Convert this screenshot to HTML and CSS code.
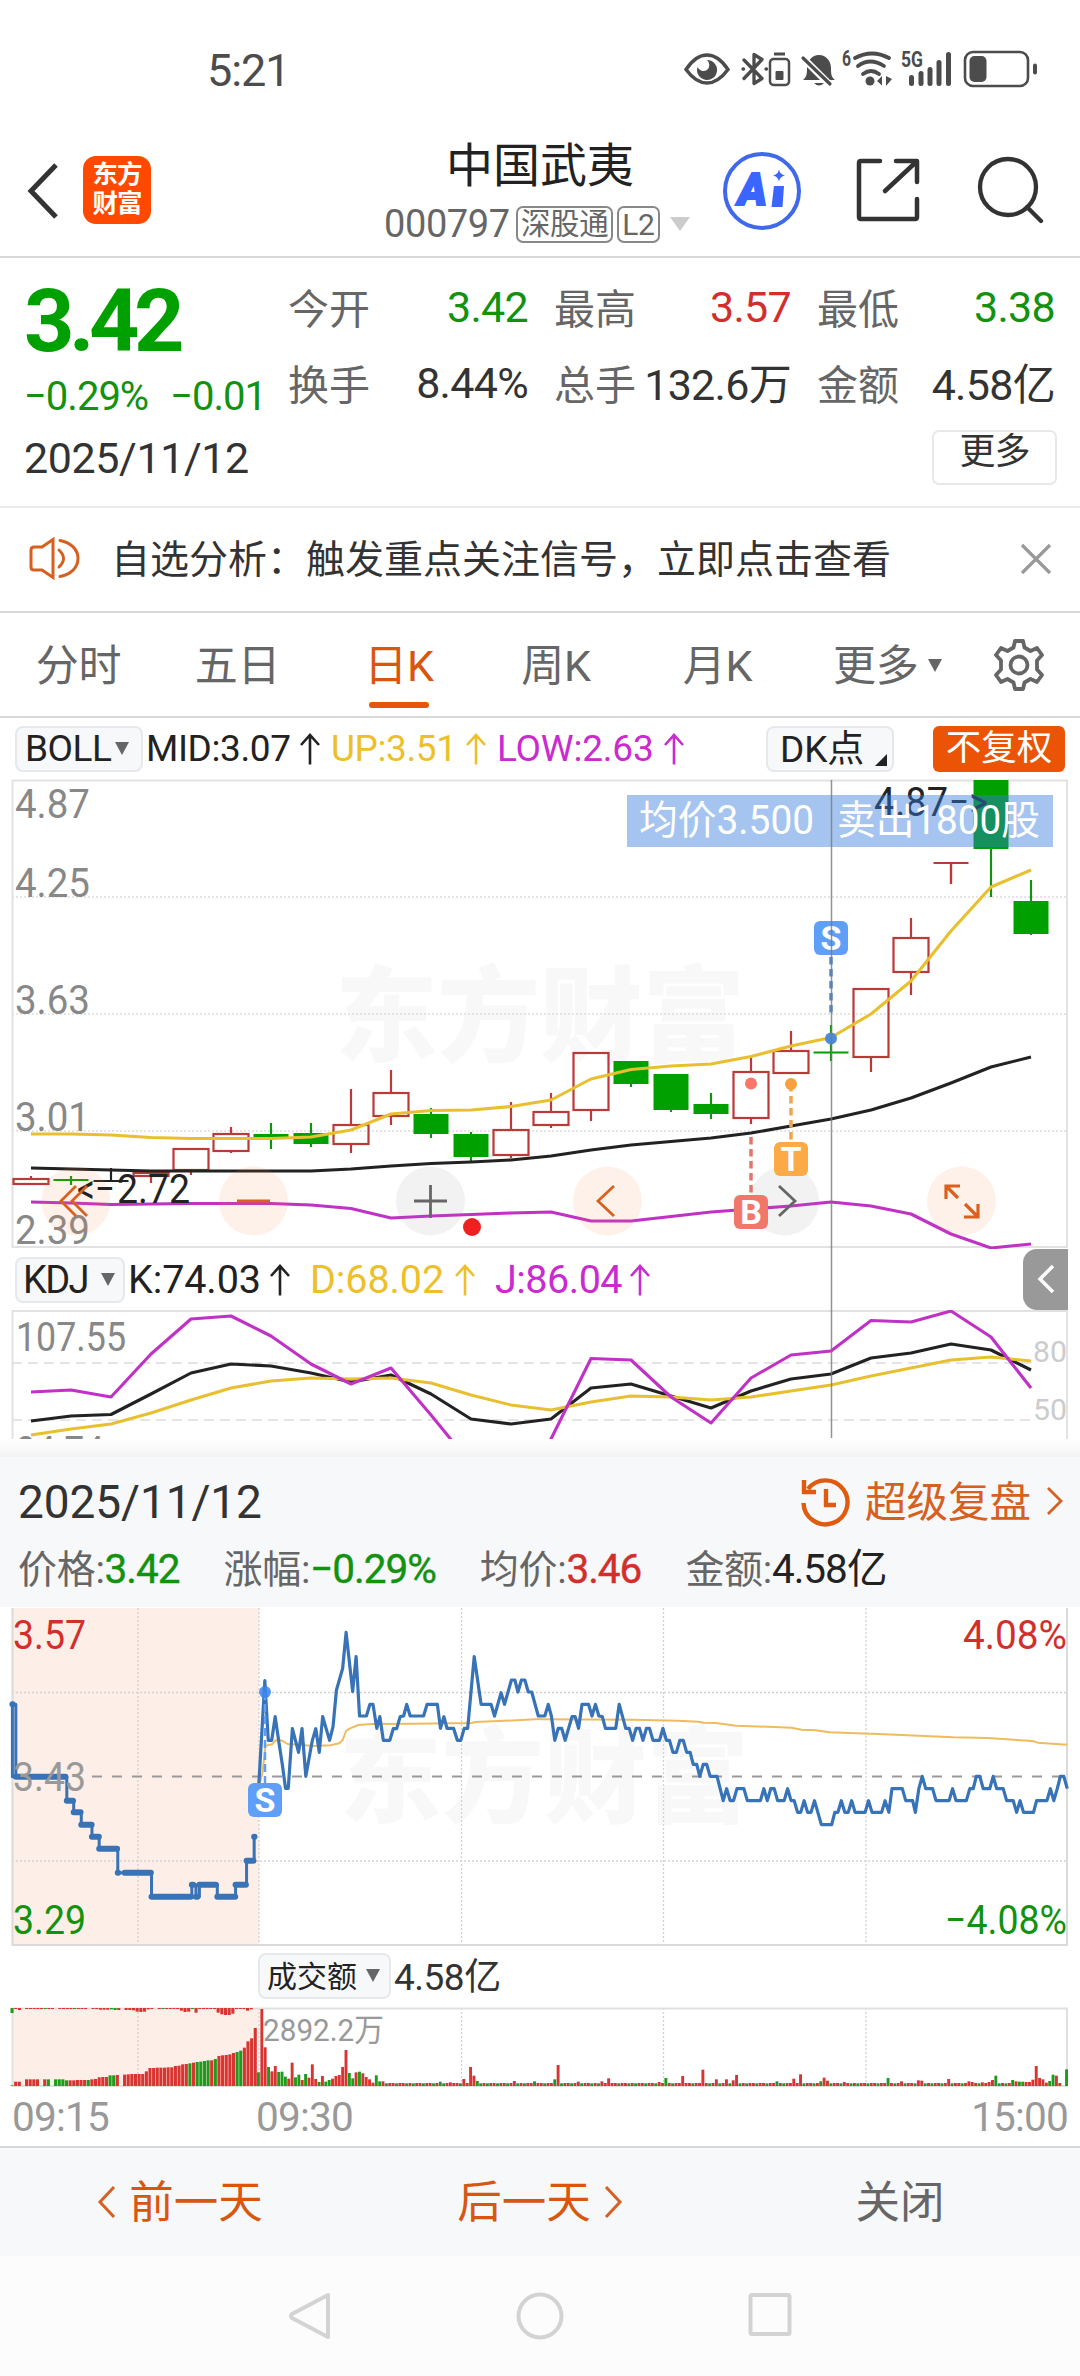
FILE: index.html
```html
<!DOCTYPE html>
<html lang="zh-CN">
<head>
<meta charset="utf-8">
<title>中国武夷 000797</title>
<link rel="stylesheet" href="styles.css">
</head>
<body>
<svg class="defs" width="0" height="0" aria-hidden="true">
  <symbol id="up" viewBox="0 0 20 32"><path d="M10 31.500V2M1 12L10 2l9 10" fill="none" stroke="currentColor" stroke-width="2.6"/></symbol>
</svg>

<header class="status">
  <span class="clock">5:21</span>
  <svg class="status-icons" width="352" height="40" viewBox="0 0 352 40" fill="none" stroke="#4c4c4c">
    <path d="M2 19.500C9 9 16 5 23 5s14 4 21 14.500C37 29 30 33 23 33S9 29 2 19.500z" stroke-width="3.400"/>
    <path d="M23 10a10 10 0 1 1-9.500 7a6.500 6.500 0 0 0 9.500 3a6.500 6.500 0 0 0 0-10z" fill="#4c4c4c" stroke="none"/>
    <g stroke-width="3.300" stroke-linejoin="round" stroke-linecap="round">
      <path d="M60 10l18 18.500-8 5V4.500l8 5L60 28.500"/><path d="M59 19h.5M82 19h.5"/>
    </g>
    <rect x="86" y="9" width="19" height="26" rx="3.500" stroke-width="2.500"/>
    <path d="M90 4h11" stroke-width="3"/><rect x="91.500" y="21" width="8" height="9" rx="1" fill="#4c4c4c" stroke="none"/>
    <path d="M119 30c4-3 4-7 4-12 0-7 5-13 12-13s12 6 12 13c0 5 0 9 4 12z" fill="#4c4c4c" stroke="none"/>
    <path d="M116 5l31 31" stroke="#fff" stroke-width="7"/>
    <path d="M119 8l27 26" stroke-width="3.200" stroke-linecap="round"/>
    <path d="M130 33h10q-5 5-10 0" fill="#4c4c4c" stroke="none"/>
    <g stroke-width="3.800" stroke-linecap="round">
      <path d="M171 8q17-9 34 0M174 16q12-9 26 0M179 24q8-6 16 0"/>
    </g>
    <circle cx="186" cy="31" r="4.500" fill="#4c4c4c" stroke="none"/>
    <path d="M193 31l5-5v9.500zM202 26v10l6-7z" fill="#4c4c4c" stroke="none"/>
    <g fill="#4c4c4c" stroke="none">
      <rect x="225" y="25" width="5" height="11" rx="2.500"/><rect x="234.500" y="21" width="5" height="15" rx="2.500"/><rect x="243.500" y="17" width="5" height="19" rx="2.500"/><rect x="252.500" y="10" width="5" height="26" rx="2.500"/><rect x="262" y="2" width="5" height="34" rx="2.500"/>
      <text x="158" y="16" class="mini" textLength="9" lengthAdjust="spacingAndGlyphs">6</text><text x="217" y="17" class="mini" textLength="22" lengthAdjust="spacingAndGlyphs">5G</text>
    </g>
    <rect x="281" y="2" width="63" height="34" rx="8" stroke-width="2.600"/>
    <rect x="285.500" y="6" width="17" height="26" rx="5" fill="#4c4c4c" stroke="none"/>
    <rect x="349" y="13.500" width="4" height="11" rx="2" fill="#4c4c4c" stroke="none"/>
  </svg>
</header>

<nav class="topbar">
  <svg class="back" width="32" height="58" viewBox="0 0 32 58"><path d="M29 3L4 29l25 26" fill="none" stroke="#333" stroke-width="5"/></svg>
  <div class="logo"><span>东方</span><span>财富</span></div>
  <div class="heading">
    <h1>中国武夷</h1>
    <div class="code-row"><span class="code">000797</span><span class="tag tag-sgt">深股通</span><span class="tag">L2</span><i class="tri tri-light"></i></div>
  </div>
  <svg class="ai" width="80" height="80" viewBox="0 0 80 80">
    <circle cx="40" cy="40" r="37" fill="none" stroke="#3f68ea" stroke-width="4"/>
    <text x="16" y="53.500" class="ai-text" textLength="29" lengthAdjust="spacingAndGlyphs">A</text>
    <path d="M52 35h10l-1.500 21h-11z" fill="#3a66ff"/>
    <path d="M57 18.500q1 5 6 6-5 1-6 6-1-5-6-6 5-1 6-6z" fill="#3a66ff"/>
  </svg>
  <svg class="share" width="66" height="66" viewBox="0 0 66 66" fill="none" stroke="#333" stroke-width="4.500" stroke-linecap="round" stroke-linejoin="round"><path d="M25 4H6q-2 0-2 2v54q0 2 2 2h54q2 0 2-2V42M41 4h21v21M60 6L30 34"/></svg>
  <svg class="search" width="68" height="68" viewBox="0 0 68 68" fill="none" stroke="#333" stroke-width="4.300" stroke-linecap="round"><circle cx="31" cy="31" r="28"/><path d="M50 51l14 14"/></svg>
</nav>

<section class="quote">
  <div class="quote-top">
    <div class="last">
      <div class="price">3.42</div>
      <div class="chg"><span>−0.29%</span><span>−0.01</span></div>
    </div>
    <dl class="stats">
      <div><dt>今开</dt><dd class="green">3.42</dd></div>
      <div><dt>最高</dt><dd class="red">3.57</dd></div>
      <div><dt>最低</dt><dd class="green">3.38</dd></div>
      <div><dt>换手</dt><dd>8.44%</dd></div>
      <div><dt>总手</dt><dd>132.6万</dd></div>
      <div><dt>金额</dt><dd>4.58亿</dd></div>
    </dl>
  </div>
  <div class="date-row"><span>2025/11/12</span><button class="more-btn">更多</button></div>
</section>

<section class="notice">
  <svg width="54" height="46" viewBox="0 0 54 46" fill="none" stroke="#d6601f" stroke-width="3"><path d="M25 3.500L14 11H6q-3 0-3 3v17q0 3 3 3h8l11 7.500z"/><path d="M31 14q9 8.500 0 17M32 4.500c11 2 18 9 18 18s-7 16-18 18" stroke-linecap="round"/></svg>
  <p>自选分析：触发重点关注信号，立即点击查看</p>
  <svg width="32" height="32" viewBox="0 0 32 32"><path d="M2 2l28 28M30 2L2 30" stroke="#999" stroke-width="3.200"/></svg>
</section>

<nav class="tabs">
  <span>分时</span><span>五日</span><span class="active">日K</span><span>周K</span><span>月K</span><span class="more">更多<i class="tri"></i></span>
  <svg class="gear" width="56" height="56" viewBox="0 0 56 56" fill="none" stroke="#666" stroke-width="3.800" stroke-linejoin="round"><circle cx="28" cy="28" r="8.500"/><path d="M24 4h8l1.500 6.500 6 3.500 6.500-3 5 7-5 5.500v9l5 5.500-5 7-6.500-3-6 3.500L32 52h-8l-1.500-6.500-6-3.500-6.500 3-5-7 5-5.500v-9L5 18l5-7 6.500 3 6-3.500z"/></svg>
</nav>

<section class="kchart">
  <div class="ind-row">
    <span class="pill boll">BOLL<i class="tri"></i></span>
    <span class="mid">MID:3.07</span><svg class="arr"><use href="#up"/></svg>
    <span class="upper">UP:3.51</span><svg class="arr upper-a"><use href="#up"/></svg>
    <span class="lower">LOW:2.63</span><svg class="arr lower-a"><use href="#up"/></svg>
    <span class="pill dk">DK点<i class="corner"></i></span>
    <span class="adjust">不复权</span>
  </div>
  <svg id="kline" class="plot" width="1080" height="470" viewBox="0 779 1080 470"></svg>
  <div class="ind-row kdj-row">
    <span class="pill kdj">KDJ<i class="tri"></i></span>
    <span class="kv">K:74.03</span><svg class="arr"><use href="#up"/></svg>
    <span class="dv">D:68.02</span><svg class="arr upper-a"><use href="#up"/></svg>
    <span class="jv">J:86.04</span><svg class="arr lower-a"><use href="#up"/></svg>
    <span class="drawer"><svg width="18" height="30" viewBox="0 0 18 30"><path d="M16 2L3 15l13 13" fill="none" stroke="#fff" stroke-width="3.500"/></svg></span>
  </div>
  <svg id="kdj" class="plot" width="1080" height="129" viewBox="0 1310 1080 129"></svg>
  <svg class="cross" width="3" height="658"><path d="M1.500 0V658" stroke="#777" stroke-opacity=".8" stroke-width="1.500"/></svg>
</section>

<div class="shade"></div>
<section class="replay">
  <div class="replay-head">
    <span class="rdate">2025/11/12</span>
    <svg class="hist" width="52" height="52" viewBox="0 0 52 52" fill="none" stroke="#e05a10" stroke-width="4.400"><path d="M8 13A22 22 0 1 1 3.500 27M4 4v12h12M26 13v16h10"/></svg>
    <span class="super">超级复盘</span>
    <svg width="20" height="32" viewBox="0 0 20 32"><path d="M3 3l13 13L3 29" fill="none" stroke="#d6601f" stroke-width="2.800"/></svg>
  </div>
  <div class="replay-stats">
    <span>价格:<b class="green">3.42</b></span><span>涨幅:<b class="green">−0.29%</b></span><span>均价:<b class="red">3.46</b></span><span>金额:<b>4.58亿</b></span>
  </div>
</section>

<svg id="minute" class="plot" width="1080" height="340" viewBox="0 1607 1080 340"></svg>
<div class="vol-row"><span class="pill vol">成交额<i class="tri"></i></span><span>4.58亿</span></div>
<svg id="volume" class="plot" width="1080" height="82" viewBox="0 2006 1080 82"></svg>
<div class="axis"><span>09:15</span><span>09:30</span><span class="end">15:00</span></div>

<footer class="days">
  <span class="day"><svg width="20" height="34" viewBox="0 0 20 34"><path d="M17 2L3 17l14 15"/></svg><em>前一天</em></span>
  <span class="day next"><em>后一天</em><svg width="20" height="34" viewBox="0 0 20 34"><path d="M3 2l14 15L3 32"/></svg></span>
  <span class="close"><em>关闭</em></span>
</footer>
<div class="sysnav">
  <svg width="44" height="48" viewBox="0 0 44 48"><path d="M40 3v42L4 26q-2-2 0-4z"/></svg>
  <svg width="48" height="48" viewBox="0 0 48 48"><circle cx="24" cy="24" r="21.500"/></svg>
  <svg width="44" height="46" viewBox="0 0 44 46"><rect x="2.500" y="3" width="39" height="39" rx="1.500"/></svg>
</div>
<script src="charts.js"></script>
</body>
</html>
```

FILE: styles.css
```css
* { box-sizing: border-box; }
body { margin: 0; width: 1080px; height: 2376px; background: #fff; color: #333; overflow: hidden;
  font-family: Roboto, "Noto Sans CJK SC", sans-serif; display: flex; flex-direction: column; }
body > * { flex: none; }
h1, p, dl, dd, dt { margin: 0; font-weight: 400; }
em { font-style: normal; }
svg { display: block; }
.defs { position: absolute; }
.green { color: #12920f; }
.red { color: #d22f2c; }
.tri { display: inline-block; border: 7.5px solid transparent; border-top: 13px solid #666; border-bottom: 0; }
.tri-light { border-width: 14px 10.5px 0; border-top-color: #ccc; }

.status { height: 128px; padding: 50px 44px 0 207px; display: flex; justify-content: space-between; }
.clock { font-size: 45px; line-height: 42px; letter-spacing: -1.1px; color: #4c4c4c; }
.status-icons { overflow: visible; }
.mini { font-size: 22px; font-weight: 700; font-family: Roboto, sans-serif; }

.topbar { height: 130px; border-bottom: 2px solid #d8d8d8; display: flex; padding-left: 27px; }
.back { margin-top: 34px; }
.logo { width: 68px; height: 68px; margin: 28px 0 0 24px; border-radius: 13px; background: #ff4800; color: #fff;
  display: flex; flex-direction: column; align-items: center; padding-top: 4px; font-size: 25.5px; line-height: 29px; font-weight: 700; letter-spacing: -1px; }
.heading { width: 320px; margin-left: 232px; }
h1 { font-size: 47px; line-height: 60px; margin: 8px 0 0 63px; color: #222; }
.code-row { display: flex; align-items: center; height: 40px; margin-top: 8px; color: #666; font-size: 38px; letter-spacing: -.4px; padding-left: 1px; }
.code { width: 132px; }
.tag { border: 2px solid #888; border-radius: 7px; height: 37px; line-height: 33px; font-size: 30px; padding: 0 3px; margin-right: 4px; letter-spacing: -.4px; }
.tag-sgt { font-size: 29.5px; }
.code-row .tri { margin-left: 6px; }
.ai { margin: 23px 0 0 19px; }
.ai-text { font: italic 900 44px Roboto, sans-serif; fill: #3a66ff; stroke: #3a66ff; stroke-width: 2px; }
.share { margin: 29px 0 0 53px; }
.search { margin: 28px 0 0 56px; }

.quote { height: 250px; border-bottom: 2px solid #ececec; }
.quote-top { display: flex; height: 172px; padding-left: 24px; }
.last { width: 265px; padding-top: 12px; color: #00a000; }
.price { height: 102px; line-height: 102px; font-size: 88px; font-weight: 700; letter-spacing: -5.500px; }
.chg { height: 48px; line-height: 48px; font-size: 40px; letter-spacing: -1px; display: flex; gap: 22px; color: #12920f; white-space: nowrap; padding-top: 1px; }
.stats { display: grid; grid-template-columns: 239px 236px 237px; grid-auto-rows: 76px; column-gap: 27px; padding-top: 10px; }
.stats div { display: flex; justify-content: space-between; align-items: center; white-space: nowrap; height: 76px; }
dt { font-size: 41px; color: #666; margin: -1px 0 0 -1px; }
dd { font-size: 43px; letter-spacing: -.7px; margin-top: 2px; }
.stats div:nth-child(n+5) dd { margin-top: -2px; }
.date-row { height: 54px; display: flex; justify-content: space-between; align-items: center; padding: 0 23px 0 24px; font-size: 43px; letter-spacing: -.4px; }
.date-row > span { margin-top: 2px; }
.more-btn { width: 125px; height: 55px; border: 2px solid #e8e8e8; border-radius: 7px; background: #fff; color: #333; font: 36px/40px Roboto, "Noto Sans CJK SC", sans-serif; padding: 0 0 12px; letter-spacing: -1px; }

.notice { height: 105px; border-bottom: 2px solid #d8d8d8; display: flex; align-items: center; padding: 0 28px 2px 28px; font-size: 39px; }
.notice p { flex: 1; margin: -6px 0 0 29px; }

.tabs { height: 105px; border-bottom: 2px solid #d8d8d8; display: grid; grid-template-columns: 157px 161px 162px 152px 171px 190px 56px; align-items: center; font-size: 43px; color: #666; }
.tabs > span { height: 103px; line-height: 106px; text-align: center; letter-spacing: -.3px; }
.tabs .active { color: #d9560f; display: flex; flex-direction: column; align-items: center; position: relative; }
.tabs .active::after { content: ""; position: absolute; bottom: 8px; width: 60px; height: 6px; border-radius: 3px; background: #e5550c; }
.tabs .more { text-align: left; padding-left: 30px; }
.tabs .tri { margin-left: 10px; vertical-align: 9px; }
.gear { margin-left: -2px; }

.kchart { position: relative; height: 721px; }
.ind-row { height: 61px; display: flex; align-items: center; padding-left: 15px; font-size: 37px; white-space: nowrap; color: #222; }
.pill { height: 46px; background: #f7f8fa; border: 2px solid #e6e8ec; border-radius: 8px; display: flex; align-items: center; color: #222; }
.arr { width: 20px; height: 32px; }
.boll { width: 128px; padding-left: 8px; letter-spacing: -.5px; }
.boll .tri { margin-left: 4px; }
.mid { width: 157px; padding-left: 3px; letter-spacing: -.4px; }
.upper { width: 146px; padding-left: 11px; letter-spacing: -.4px; color: #edc02a; }
.lower { width: 178px; padding-left: 11px; letter-spacing: -.2px; color: #ca2bd0; }
.upper-a { color: #edc02a; }
.lower-a { color: #ca2bd0; }
.dk { width: 128px; margin-left: 82px; padding: 0 0 5px 12px; position: relative; letter-spacing: -.1px; }
.corner { position: absolute; right: 5px; bottom: 4px; border-style: solid; border-width: 0 0 12px 12px; border-color: transparent transparent #222; }
.adjust { width: 132px; height: 46px; margin-left: 39px; border-radius: 6px; background: #eb5405; color: #fff; text-align: center; font-size: 35.5px; line-height: 45px; }
.plot { overflow: hidden; }
.kdj-row { height: 61px; font-size: 39.5px; }
.kdj { width: 110px; padding-left: 6px; letter-spacing: -1.6px; font-size: 38px; }
.kdj .tri { margin-left: 13px; }
.kv { width: 145px; padding-left: 3px; letter-spacing: -.1px; }
.dv { width: 165px; padding-left: 20px; color: #edc02a; letter-spacing: -.1px; }
.jv { width: 155px; padding-left: 20px; color: #ca2bd0; letter-spacing: -.5px; }
.drawer { width: 45px; height: 61px; margin-left: 373px; background: #999; border-radius: 14px 0 0 14px; padding: 15px 0 0 14px; }
.cross { position: absolute; left: 829.5px; top: 62px; }

.shade { height: 18px; background: linear-gradient(#fff, #f3f3f3); }
.replay { height: 150px; background: #f7f8fa; }
.replay-head { height: 88px; display: flex; align-items: center; padding-left: 18px; font-size: 46px; }
.rdate { width: 782px; letter-spacing: -.1px; padding-top: 1px; }
.hist { margin-top: 2px; }
.super { width: 180px; margin: -4px 0 0 13px; font-size: 41.5px; color: #d6601f; }
.replay-stats { display: flex; height: 48px; align-items: center; padding: 0 0 7px 18px; font-size: 39px; letter-spacing: -.3px; color: #666; gap: 44px; white-space: nowrap; }
.replay-stats b { font-weight: 400; font-size: 40.5px; letter-spacing: -1px; }
.replay-stats b.green, .replay-stats b.red { -webkit-text-stroke: .4px currentColor; }
.replay-stats span:last-child b { color: #222; }

.vol-row { height: 59px; display: flex; align-items: center; padding: 0 0 2px 258px; font-size: 37px; letter-spacing: -.5px; gap: 3px; }
.vol-row > span:last-child { margin-top: -4px; }
.vol { width: 133px; padding: 0 0 4px 7px; font-size: 30px; letter-spacing: 0; }
.vol .tri { margin: 4px 0 0 9px; }
.axis { height: 58px; display: flex; align-items: center; padding: 0 12px; font-size: 40.5px; letter-spacing: -.8px; color: #999; }
.axis span { width: 244px; }
.axis .end { margin-left: auto; text-align: right; }

.days { height: 110px; border-top: 2px solid #d8d8d8; background: #f7f8fa; display: grid; grid-template-columns: repeat(3, 360px); font-size: 44.5px; color: #d9560f; }
.days span { display: flex; align-items: center; justify-content: center; gap: 12px; }
.days em { margin-top: -7px; }
.days svg { fill: none; stroke: #d6601f; stroke-width: 3; }
.days .close { color: #666; }
.sysnav { flex: 1; background: #fcfcfc; display: flex; padding: 36px 288px 0; justify-content: space-between; }
.sysnav svg { fill: none; stroke: #d3d3d3; stroke-width: 4; stroke-linejoin: round; }

.lbl { font-family: Roboto, "Noto Sans CJK SC", sans-serif; font-size: 40px; }
.lbl.small { font-size: 30px; }
.lbl.cap { font-size: 32px; }
.mark { font: 900 104px "Noto Sans CJK SC", sans-serif; fill: #f8f8f8; }
.badge { font: 700 34px Roboto, sans-serif; fill: #fff; text-anchor: middle; }
```

FILE: charts.js
```js
const RED = '#d83432', GREEN = '#1f9a1c';
const cx = i => 31 + 40 * i;
const line = (pts, color, w) => `<polyline points="${pts}" fill="none" stroke="${color}" stroke-width="${w}" stroke-linejoin="round"/>`;
const series = (ys, color) => line(ys.map((y, i) => `${cx(i)},${y}`).join(' '), color, 3.1);
const label = (x, y, t, w, color = '#888', cls = '') => `<text class="lbl ${cls}" x="${x}" y="${y}" textLength="${w}" lengthAdjust="spacingAndGlyphs" fill="${color}">${t}</text>`;
const seg = (d, color, w, extra = '') => `<path d="${d}" fill="none" stroke="${color}" stroke-width="${w}" ${extra}/>`;
const badge = (x, y, t, color) => `<rect x="${x - 17}" y="${y - 17}" width="34" height="34" rx="6" fill="${color}"/><text class="badge" x="${x}" y="${y + 12}">${t}</text>`;
const mark = (x, y) => `<text class="mark" x="${x}" y="${y}" textLength="410" lengthAdjust="spacingAndGlyphs">东方财富</text>`;

// Daily candles: [direction, body top, body bottom, wick top, wick bottom]
const candles = [
  ['r', 1179, 1184, 1176, 1185], ['g', 1180, 1181, 1176, 1185], ['k', 1181, 1182, 1168, 1181], ['r', 1173, 1176, 1172, 1183],
  ['r', 1149, 1170, 1148, 1175], ['r', 1134, 1151, 1127, 1153], ['g', 1134, 1139, 1123, 1149], ['g', 1133, 1144, 1123, 1147],
  ['r', 1125, 1144, 1089, 1153], ['r', 1093, 1116, 1070, 1125], ['g', 1114, 1134, 1108, 1138], ['g', 1134, 1157, 1132, 1161],
  ['r', 1130, 1155, 1102, 1158], ['r', 1112, 1125, 1093, 1128], ['r', 1053, 1110, 1053, 1121], ['g', 1061, 1084, 1061, 1087],
  ['g', 1074, 1110, 1074, 1112], ['g', 1104, 1114, 1093, 1119], ['r', 1072, 1118, 1057, 1124], ['r', 1051, 1073, 1031, 1073],
  ['g', 1052.5, 1054, 1025, 1061], ['r', 989, 1057, 989, 1072], ['r', 938, 972, 918, 995], ['r', 863, 863, 863, 884],
  ['g', 780, 849, 780, 897], ['g', 901, 934, 880, 935]];
const upper = [1134, 1134, 1135, 1137.5, 1138.5, 1138.5, 1138.5, 1137, 1130, 1114, 1110.5, 1110, 1106.5, 1100, 1079, 1069.5, 1066, 1064, 1056.5, 1046, 1037.5, 1014, 981, 931, 887, 870];
const middle = [1168, 1169, 1170, 1171, 1171, 1171, 1171, 1171, 1169, 1166, 1163.5, 1162, 1160, 1156, 1150, 1145, 1141.5, 1138, 1133, 1126, 1119, 1110, 1098, 1083, 1067, 1057];
const lower = [1202, 1203, 1204.5, 1204, 1203.5, 1203.5, 1203.5, 1205, 1208.5, 1218, 1216, 1214.5, 1213, 1212, 1221, 1221, 1216.5, 1212, 1209, 1206, 1202, 1206, 1214, 1234, 1248, 1244];

let k = mark(335, 1054);
k += seg('M12 897H1067M12 1014H1067M12 1131H1067', '#ddd', 1.5, 'stroke-dasharray="2 2"');
k += seg('M12.5 780.500H1067V1247H12.500z', '#e2e2e2', 2);
[[818, '4.87'], [897, '4.25'], [1014, '3.63'], [1131, '3.01'], [1244, '2.39']].forEach(([y, t]) => k += label(15, y, t, 75));
candles.forEach(([c, t, b, wt, wb], i) => {
  const x = cx(i), col = c === 'r' ? '#b93a38' : c === 'g' ? '#00a000' : '#222';
  k += seg(`M${x} ${wt}V${c === 'r' ? t : wb}${c === 'r' ? `M${x} ${b}V${wb}` : ''}`, c === 'g' ? '#12920f' : col, 2.2);
  if (c === 'r' && b > t) k += `<rect x="${x - 17.5}" y="${t}" width="35" height="${b - t}" fill="none" stroke="${col}" stroke-width="2.2"/>`;
  else if (c === 'r') k += seg(`M${x - 17.5} ${t}h35M${x} ${t}V${wb}`, col, 2.2);
  else if (b - t < 2) k += seg(`M${x - 17.5} ${t}h35`, col, 2.2);
  else k += `<rect x="${x - 17.5}" y="${t}" width="35" height="${b - t}" fill="${col}"/>`;
});
k += series(lower, '#c031c6') + series(middle, '#222') + series(upper, '#e8c02f');
[[76, 1], [253.5, 1], [430.5, 0], [607.5, 1], [784.5, 0], [961.5, 1]].forEach(([x, hot]) =>
  k += `<circle cx="${x}" cy="1201" r="34.500" fill="${hot ? '#f97b3c' : '#888'}" fill-opacity=".11"/>`);
k += label(77, 1203, '&lt;−', 38, '#222') + label(117, 1203, '2.72', 73, '#222');
k += label(874, 816, '4.87', 74, '#222') + label(949, 816, '−&gt;', 39, '#222');
k += seg('M76 1186l-15 15 15 15M87 1186l-15 15 15 15M237 1201h33M614 1186l-16 15 16 15', '#d9601f', 2.8);
k += seg('M414 1201h33M430.500 1185v33M779 1186l16 15-16 15', '#666', 2.8);
k += seg('M946 1199v-13h14M947 1187l11 11M978 1204v13h-14M977 1216l-12-12', '#d9601f', 3.2);
k += '<circle cx="472" cy="1227" r="9" fill="#f02020"/>';
k += seg('M831 957V1014', '#5b8cc8', 3.5, 'stroke-dasharray="7.500 4.500"') + '<circle cx="831" cy="1038.500" r="6" fill="#4b8ddc"/>' + badge(831, 938, 'S', '#5f9ff8');
k += seg('M791 1084V1140', '#eda54f', 3.5, 'stroke-dasharray="7.500 4.500"') + '<circle cx="791" cy="1084" r="6" fill="#f7a13c"/>' + badge(791, 1159, 'T', '#fbaa45');
k += seg('M751 1137V1194', '#e0766c', 3.5, 'stroke-dasharray="7.500 4.500"') + '<circle cx="751" cy="1083.500" r="6" fill="#fb7668"/>' + badge(751, 1212, 'B', '#f2776b');
k += '<rect x="627" y="795" width="426" height="52" fill="#327bdd" fill-opacity=".44"/>';
k += label(639, 834, '均价3.500', 175, '#fff') + label(837, 834, '卖出1800股', 203, '#fff');
document.getElementById('kline').innerHTML = k;

// KDJ oscillator
const J = [1392, 1390, 1397, 1354, 1319, 1316, 1336, 1364, 1384, 1368, 1415, 1464, 1480, 1439, 1358.5, 1360, 1397, 1423, 1378, 1355, 1351, 1320.5, 1322, 1311, 1337, 1388];
const K = [1421, 1416, 1414.5, 1394, 1373, 1364, 1366, 1373, 1382, 1375, 1394, 1419, 1424, 1419, 1388, 1384, 1396, 1408, 1391, 1379, 1374, 1358, 1353, 1344, 1350, 1370];
const D = [1435, 1429, 1424, 1413, 1400, 1388, 1381, 1378, 1379, 1378, 1383, 1395, 1405, 1410, 1402, 1396, 1397, 1400, 1397, 1391, 1385, 1376, 1368, 1360, 1357, 1361];
document.getElementById('kdj').innerHTML =
  seg('M12.500 1445V1311H1067V1445', '#e2e2e2', 2) + seg('M12 1363H1033M12 1420H1033', '#ddd', 1.6, 'stroke-dasharray="10 6"') +
  label(16, 1351, '107.55', 110) + label(16, 1465, '24.74', 88) +
  label(1033, 1362, '80', 34, '#ccc', 'small') + label(1033, 1420, '50', 34, '#ccc', 'small') +
  series(K, '#222') + series(D, '#e8c02f') + series(J, '#c031c6');

// Minute chart: each half is plotted on a finer grid and scaled into its 540px slot
const half = (x, body) => `<svg x="${x}" y="1600" width="540" height="350" viewBox="0 0 1568 1050" preserveAspectRatio="none">${body}</svg>`;
const fine = (pts, color, w) => `<polyline points="${pts}" fill="none" stroke="${color}" stroke-width="${w}" stroke-linejoin="round" vector-effect="non-scaling-stroke"/>`;
const BLUE = '#3873b7', GOLD = '#eebb5e';
const auction = '36,313 36,530 46,530 46,313 46,530 194,530 194,602 214,602 214,637 236,637 236,674 267,674 267,710 288,710 288,746 342,746 342,818 440,818 440,890 557,890 557,854 569,854 569,890 579,890 579,854 631,854 631,890 684,890 684,854 716,854 716,782 738,782 738,710';
const am = '750,580 769,242 779,421 789,421 799,350 809,421 820,495 829,565 837,565 849,386 867,457 877,386 888,529 907,421 917,386 927,457 937,350 957,421 967,380 977,270 995,205 1005,97 1024,275 1034,170 1044,348 1064,348 1074,313 1083,313 1094,385 1103,350 1113,421 1132,421 1142,386 1152,386 1162,350 1172,348 1181,313 1191,348 1230,348 1240,313 1270,313 1279,385 1289,350 1298,385 1317,385 1328,421 1338,421 1348,385 1358,385 1377,170 1397,313 1426,313 1436,348 1455,278 1465,313 1485,240 1495,240 1504,276 1514,240 1524,240 1534,276 1544,276 1563,348 1568,348';
const pm = '0,348 14,348 24,313 33,348 43,421 53,385 63,385 73,421 93,350 102,350 112,385 122,313 141,313 151,348 161,313 171,348 181,350 190,385 220,385 230,313 249,385 259,385 269,421 279,385 289,385 299,421 309,385 318,385 328,421 347,421 357,385 367,421 376,421 386,457 396,457 406,421 416,421 426,457 436,457 445,493 455,493 464,529 474,493 484,493 494,529 514,529 532,602 542,566 552,602 562,602 572,566 592,566 602,602 640,602 650,566 660,602 670,566 680,566 690,602 709,602 719,566 729,602 738,602 748,637 757,637 767,602 777,637 787,637 797,602 817,674 847,674 856,637 865,637 875,602 885,637 895,637 905,602 915,637 944,637 954,602 964,637 992,637 1002,602 1013,637 1022,566 1052,566 1062,602 1082,602 1090,637 1100,566 1110,529 1120,566 1140,566 1150,602 1188,602 1198,566 1208,602 1238,602 1248,566 1258,566 1267,529 1277,529 1287,566 1306,566 1316,529 1326,566 1345,566 1355,602 1374,602 1384,637 1394,602 1404,637 1433,637 1442,602 1472,602 1482,566 1492,602 1502,566 1511,529 1521,529 1531,566';
const avgAm = '752,560 762,520 771,437 790,433 800,421 818,421 835,432 870,434 910,438 960,436 985,430 995,420 1005,393 1015,386 1040,375 1080,372 1200,371 1370,369 1380,366 1500,361 1568,357';
const avgPm = '0,358 270,359 400,362 460,365 475,368 510,369 570,377 730,383 760,389 800,391 840,397 1000,403 1200,412 1300,414 1430,423 1445,428 1531,434';
// flat runs of the call auction are drawn as bold ticks
const runs = 'M36 313h1M46 530H190M194 602h18M214 637h20M236 674h30M267 710h20M288 746h52M342 818h1M362 818h76M440 890h114M557 854h4M569 890h4M579 854h48M631 890h52M684 854h30M716 782h20M738 710h1';
let m = '<rect x="12" y="1608" width="247" height="337" fill="#fdeee7"/>' + mark(339, 1815);
m += seg('M138 1608V1945M259 1608V1945M461.500 1608V1945M663.500 1608V1945M866 1608V1945M12 1692.500H1067M12 1861H1067', '#d2d2d2', 1.3, 'stroke-dasharray="2 2"');
m += seg('M12.500 1608V1945H1067V1608', '#dadada', 2);
m += seg('M92 1776.500H1067', '#999', 2, 'stroke-dasharray="10 10"');
m += half(0, fine(auction, BLUE, 3) + `<path d="${runs}" stroke="${BLUE}" stroke-width="6" stroke-linecap="round" vector-effect="non-scaling-stroke"/>` + fine(avgAm, GOLD, 2) + fine(am, BLUE, 3.2));
m += half(540, fine(avgPm, GOLD, 2) + fine(pm, BLUE, 3.2));
m += label(13, 1649, '3.57', 73, '#d22f2c') + label(13, 1791, '3.43', 73, '#999') + label(13, 1934, '3.29', 73, '#12920f');
m += label(963, 1649, '4.08%', 104, '#d22f2c') + label(945, 1934, '−4.08%', 122, '#12920f');
m += seg('M265 1692V1783', '#5f9ff8', 2.5, 'stroke-dasharray="8 4"') + '<circle cx="265" cy="1692" r="6" fill="#3a84f0" fill-opacity=".85"/>' + badge(265, 1800, 'S', '#5f9ff8');
document.getElementById('minute').innerHTML = m;

// Turnover bars. Heights are in thirds of a pixel
const baseY = 2086, topY = 2008;
let v = '<rect x="12" y="2008" width="247" height="78" fill="#fdeee7"/>';
v += seg('M138 2008V2086M259 2008V2086M461.500 2008V2086M663.500 2008V2086M866 2008V2086', '#d2d2d2', 1.3, 'stroke-dasharray="2 2"') + seg('M12.500 2008.500H1067V2086H12.500z', '#e0e0e0', 2);
const bar = (x, h, g, w, y) => `<rect x="${x.toFixed(2)}" y="${(y === undefined ? baseY - h / 3 : y).toFixed(2)}" width="${w}" height="${(h / 3).toFixed(2)}" fill="${g ? GREEN : RED}"/>`;
const pre = 'g2 r13 r13 - r20 r20 r20 r20 - r20 g20 - g20 g20 g20 g17 r17 r17 r18 r18 r18 g18 r20 r21 r26 r27 r27 g32 g32 r33 - r34 r35 r36 r36 r36 r36 r44 r54 r54 r55 r55 r55 r56 r56 r60 r61 r65 r66 g68 r70 g72 g73 g75 g77 r77 g81 r90 r92 r93 r95 r99 g102 g106 r115 r134 r143 r174'.split(' ');
pre.forEach((s, i) => { if (s !== '-') v += bar(10.5 + i * 3.63, +s.slice(1), s[0] === 'g', 3.1); });
const hang = { 0: 'g15', 1: 'r3', 2: 'r6', 24: 'r5', 25: 'r5', 26: 'r5', 27: 'g4', 28: 'g6', 29: 'r6', 31: 'r6', 32: 'r6', 33: 'r7', 34: 'r11', 35: 'r12', 36: 'r11', 37: 'r4', 46: 'r8', 47: 'r12', 48: 'r11', 50: 'r14', 56: 'r14', 57: 'r19', 58: 'r21', 59: 'r21', 60: 'r17', 64: 'r8', 65: 'r4' };
for (let i = 0; i < 67; i++) {
  const s = hang[i] || (i % 9 === 3 ? null : (i % 8 === 1 ? 'g3' : 'r3'));
  if (s) v += bar(10.5 + i * 3.68, +s.slice(1), s[0] === 'g', 3.1, topY);
}
const open = 'g41 r231 r116 g57 r44 r60 g42 g43 g28 r22 r70 g26 g34 r18 g36 r25 r65 r21 g12 r30 g13 g18 r22 r30 r33 r57 r108 g39 g23 r41 g43 r38 r27 r20 r10 g32 g14 r14'.split(' ');
const peaks = {};
[[1316, 'g13'], [1346, 'r11'], [1386, 'r21'], [1407, 'r57'], [1417, 'r31'], [1427, 'g15'], [1537, 'r14']].forEach(([x, s]) => peaks[Math.round((x / 3 - 257) / 3.367)] = s);
[[745, 'r15'], [775, 'g14'], [805, 'g20'], [810, 'r63'], [838, 'r13'], [873, 'r14'], [882, 'r23'], [957, 'r12'], [966, 'g24'], [990, 'r30'], [1020, 'r49'], [1040, 'r20'], [1055, 'r20'], [1065, 'r17'], [1070, 'r33'], [1128, 'g14'], [1152, 'r22'], [1162, 'r35'], [1192, 'g14'], [1197, 'r25'], [1202, 'r16'], [1227, 'r12'], [1290, 'g24'], [1310, 'r14'], [1335, 'r17'], [1340, 'r16'], [1378, 'r21'], [1407, 'r14'], [1412, 'r12'], [1427, 'r11'], [1437, 'r12'], [1442, 'r18'], [1447, 'g31'], [1471, 'g18'], [1476, 'r14'], [1481, 'g13'], [1486, 'g13'], [1491, 'r12'], [1496, 'r12'], [1501, 'r19'], [1505.5, 'r60'], [1510.5, 'r24'], [1515, 'r20'], [1520, 'r10'], [1525, 'g15'], [1530, 'g34'], [1535, 'r31'], [1540, 'r9'], [1549, 'g50']]
  .forEach(([x, s]) => peaks[Math.round((x / 1.452 - 258.500) / 3.367)] = s);
for (let i = 0; i < 241; i++) {
  if (i === 239) continue;
  const s = open[i] || peaks[i] || ((i * 7) % 11 < 4 ? 'g8' : 'r9');
  v += bar(257 + i * 3.367, +s.slice(1), s[0] === 'g', 2.9);
}
v += label(263, 2041, '2892.2万', 121, '#999', 'cap');
document.getElementById('volume').innerHTML = v;
```
